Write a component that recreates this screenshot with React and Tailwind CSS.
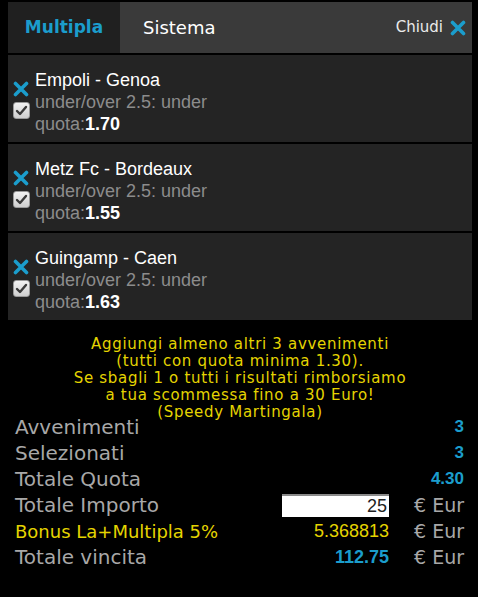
import React from 'react';

const events = [
  { name: 'Empoli - Genoa', market: 'under/over 2.5: under', quota: '1.70' },
  { name: 'Metz Fc - Bordeaux', market: 'under/over 2.5: under', quota: '1.55' },
  { name: 'Guingamp - Caen', market: 'under/over 2.5: under', quota: '1.63' },
];

const BlueX = ({ size = 16 }) => (
  <svg width={size} height={size} viewBox="0 0 16 16">
    <path d="M2.5 2.5 L13.5 13.5 M13.5 2.5 L2.5 13.5" stroke="#1b9dcc" strokeWidth="3.6" strokeLinecap="round" />
  </svg>
);

const CheckBox = () => (
  <div className="w-[17px] h-[17px] rounded-[3px] border border-[#9a9a9a] bg-gradient-to-b from-[#f2f2f2] to-[#cfcfcf] flex items-center justify-center">
    <svg width="13" height="13" viewBox="0 0 13 13">
      <path d="M2 7 L5 10 L11 3" stroke="#3a3a3a" strokeWidth="2.4" fill="none" strokeLinecap="round" strokeLinejoin="round" />
    </svg>
  </div>
);

const EventRow = ({ ev }) => (
  <div className="bg-[#242424] h-[87px] flex items-center pl-[4px]">
    <div className="flex flex-col items-center gap-[5px] w-[18px] mt-[2px]">
      <BlueX size={16} />
      <CheckBox />
    </div>
    <div className="ml-[5px] mt-[6px] font-['Liberation_Sans',Arial,sans-serif] text-[18px] leading-[22px]">
      <div className="text-white">{ev.name}</div>
      <div className="text-[#8c8c8c]">{ev.market}</div>
      <div className="text-[#8c8c8c]">
        quota:<span className="text-white font-bold">{ev.quota}</span>
      </div>
    </div>
  </div>
);

const SummaryRow = ({ label, labelClass = 'text-[#a8a8a8] text-[20px]', children }) => (
  <div className="flex items-center h-[26px]">
    <div className={`flex-1 ${labelClass} font-['DejaVu_Sans',Verdana,sans-serif]`}>{label}</div>
    {children}
  </div>
);

const Eur = () => (
  <div className="w-[75px] text-right text-[#a8a8a8] text-[19px] font-['DejaVu_Sans',Verdana,sans-serif]">€ Eur</div>
);

export default function App() {
  return (
    <div className="bg-black min-h-[597px] w-[478px] pl-[8px] pt-[2px] pr-[6px]">
      {/* tabs */}
      <div className="flex h-[51px] bg-[#3a3a3a] font-['DejaVu_Sans',Tahoma,sans-serif]">
        <div className="w-[112px] bg-[#202020] flex items-center justify-center text-[#1b9dcc] font-bold text-[17px]">
          Multipla
        </div>
        <div className="flex items-center pl-[23px] text-white text-[18px]">Sistema</div>
        <div className="ml-auto flex items-center gap-[7px] pr-[6px] text-[#eaeaea] text-[15px]">
          Chiudi <BlueX size={16} />
        </div>
      </div>

      <div className="flex flex-col gap-[2px] mt-[2px]">
        {events.map((ev) => (
          <EventRow key={ev.name} ev={ev} />
        ))}
      </div>

      <div className="h-[78px] mt-[16px] text-center text-[#e5d400] text-[15px] tracking-[0.7px] leading-[17px] font-['DejaVu_Sans',Verdana,sans-serif]">
        Aggiungi almeno altri 3 avvenimenti
        <br />
        (tutti con quota minima 1.30).
        <br />
        Se sbagli 1 o tutti i risultati rimborsiamo
        <br />
        a tua scommessa fino a 30 Euro!
        <br />
        (Speedy Martingala)
      </div>

      <div className="pl-[7px] pr-[8px]">
        <SummaryRow label="Avvenimenti">
          <div className="text-[#1b9dcc] font-bold text-[17px] font-['Liberation_Sans',Arial,sans-serif]">3</div>
        </SummaryRow>
        <SummaryRow label="Selezionati">
          <div className="text-[#1b9dcc] font-bold text-[17px] font-['Liberation_Sans',Arial,sans-serif]">3</div>
        </SummaryRow>
        <SummaryRow label="Totale Quota">
          <div className="text-[#1b9dcc] font-bold text-[17px] font-['Liberation_Sans',Arial,sans-serif]">4.30</div>
        </SummaryRow>
        <SummaryRow label="Totale Importo">
          <input
            type="text"
            defaultValue="25"
            className="w-[107px] h-[23px] bg-white border-t-2 border-t-[#8a8a8a] text-right pr-[2px] text-[18px] text-[#222] font-['Liberation_Sans',Arial,sans-serif] outline-none"
          />
          <Eur />
        </SummaryRow>
        <SummaryRow label="Bonus La+Multipla 5%" labelClass="text-[#e5d400] text-[18px]">
          <div className="text-[#e5d400] text-[18px] font-['Liberation_Sans',Arial,sans-serif]">5.368813</div>
          <Eur />
        </SummaryRow>
        <SummaryRow label="Totale vincita">
          <div className="text-[#1b9dcc] font-bold text-[18px] font-['Liberation_Sans',Arial,sans-serif]">112.75</div>
          <Eur />
        </SummaryRow>
      </div>
    </div>
  );
}
